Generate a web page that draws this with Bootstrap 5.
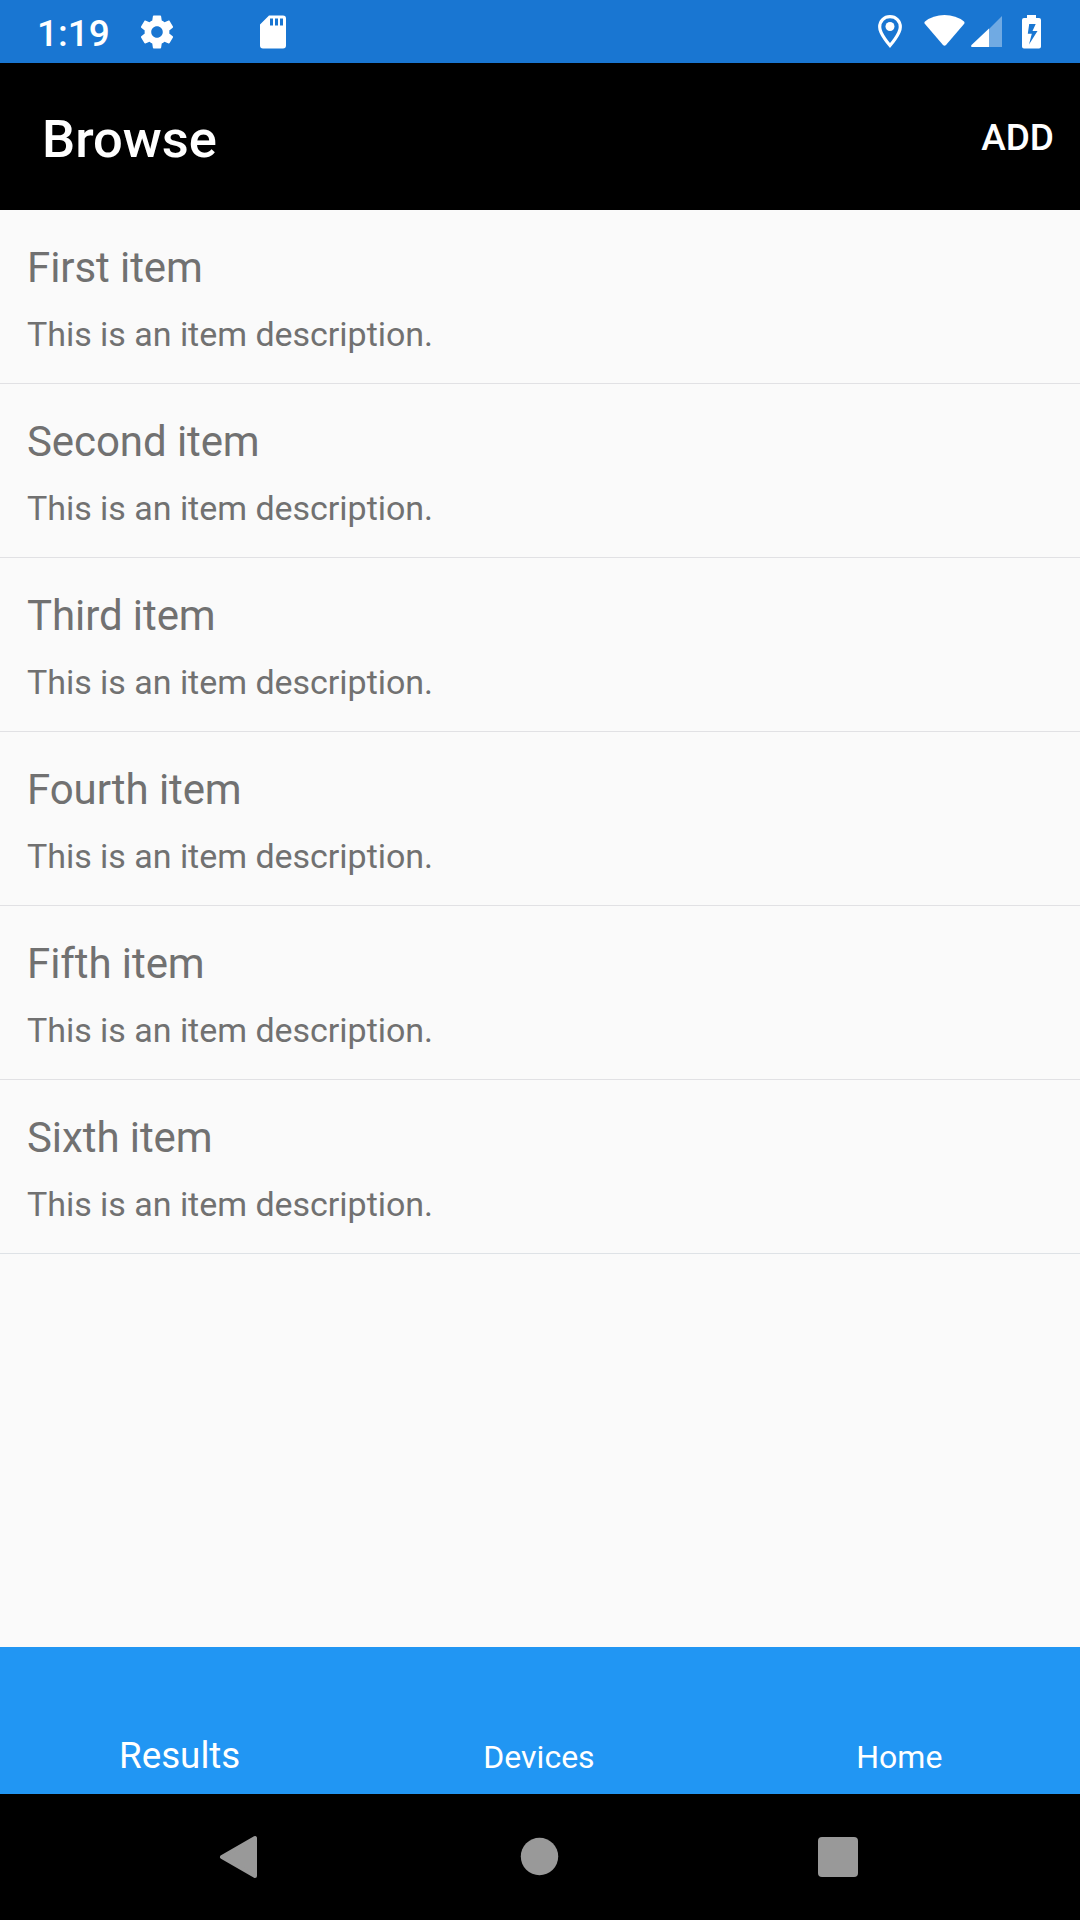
<!DOCTYPE html>
<html lang="en">
<head>
<meta charset="utf-8">
<meta name="viewport" content="width=device-width, initial-scale=1">
<title>Browse</title>
<link href="https://cdn.jsdelivr.net/npm/bootstrap@5.3.0/dist/css/bootstrap.min.css" rel="stylesheet">
<style>
body{font-family:Roboto,"Liberation Sans",sans-serif;background:#fafafa;height:1920px;overflow:hidden}
svg{display:block;flex:none}
.status{height:63px;background:#1976d2;padding:0 39px 0 37px}
.clock{font-size:37px;font-weight:500;line-height:63px;width:104px;padding-top:3px}
.gear{margin-right:83px}
.pin{margin-right:22px}
.signal{margin-left:5px}
.appbar{height:147px;padding:0 26px 0 42px}
.title-text{font-size:52.5px;font-weight:500;line-height:62px;padding-top:4px}
.action{font-size:37px;font-weight:500;line-height:44px;padding:2px 0 0}
.entries .list-group-item{height:174px;padding:33px 27px 0;background:transparent;border-width:0 0 1px;border-color:#e1e1e4;color:#717171}
.entry-name{font-size:42px;line-height:50px;letter-spacing:-.08px}
.entry-note{font-size:34px;line-height:40px;margin-top:21px;letter-spacing:-.03px}
.tabs{height:147px;background:#2196f3;padding-bottom:16px}
.tabs .nav-link{font-size:32px;line-height:40px;padding:0 1px 1px 0;color:#fff}
.tabs .nav-link.active{font-size:36.75px;padding:0 0 2px}
.sysbar{height:126px;padding:0 222px 0 219px}
</style>
</head>
<body class="d-flex flex-column">
<div class="status d-flex align-items-center text-white">
  <div class="clock">1:19</div>
  <svg class="gear" width="32" height="34" viewBox="2.3 1.8 19.4 20.4" fill="#fff"><path d="M19.430 12.980c.04-.32.07-.64.07-.98s-.03-.66-.07-.98l2.110-1.650c.19-.15.24-.42.12-.64l-2-3.460c-.12-.22-.39-.3-.61-.22l-2.490 1c-.52-.4-1.080-.73-1.690-.98l-.38-2.650C14.460 2.180 14.250 2 14 2h-4c-.25 0-.46.18-.49.42l-.38 2.650c-.61.25-1.170.59-1.690.98l-2.490-1c-.23-.09-.49 0-.61.22l-2 3.460c-.13.22-.07.49.12.64l2.110 1.650c-.04.32-.07.65-.07.98s.03.66.07.98l-2.110 1.650c-.19.15-.24.42-.12.64l2 3.460c.12.22.39.3.61.22l2.490-1c.52.4 1.080.73 1.690.98l.38 2.650c.03.24.24.42.49.42h4c.25 0 .46-.18.49-.42l.38-2.650c.61-.25 1.170-.59 1.690-.98l2.490 1c.23.09.49 0 .61-.22l2-3.460c.12-.22.07-.49-.12-.64l-2.110-1.650zM12 15.500c-1.930 0-3.500-1.570-3.500-3.500s1.570-3.500 3.500-3.500 3.500 1.570 3.500 3.500-1.570 3.500-3.500 3.500z"/></svg>
  <svg width="32" height="34" viewBox="0 0 32 34" fill="#fff"><path fill-rule="evenodd" d="M13 .5h14q3 0 3 3V30.500q0 3-3 3H7q-3 0-3-3V9.500zM14 3.500v7h3v-7zM19 3.500v7h3v-7zM24 3.500v7h3v-7z"/></svg>
  <div class="d-flex align-items-center ms-auto">
    <svg class="pin" width="24" height="34" viewBox="0 0 24 34"><path d="M12 1.700C6 1.700 1.700 6 1.700 12 1.700 19 12 30.500 12 30.500S22.300 19 22.300 12C22.300 6 18 1.700 12 1.700z" fill="none" stroke="#fff" stroke-width="3.200"/><circle cx="12" cy="11.500" r="4.500" fill="#fff"/></svg>
    <svg width="41" height="34" viewBox="0 0 41 34"><path d="M1 6.500Q9 0 20.500 0T40 6.500Q41 7.500 40 9L22 30Q20.500 31.500 19 30L1 9Q-.2 7.500 1 6.500z" fill="#fff"/></svg>
    <svg class="signal" width="32" height="34" viewBox="0 0 32 34"><path d="M32 1v31H19V14z" fill="#fff" opacity=".38"/><path d="M19 13.500V32H3Q0 32 1.500 30z" fill="#fff"/></svg>
    <svg width="39" height="34" viewBox="-20 0 39 34"><path fill="#fff" fill-rule="evenodd" d="M5 0h9v3h3q2 0 2 2v26.500q0 2-2 2H2q-2 0-2-2V5q0-2 2-2h3zM7.200 9 5.800 18.800h4L7 29.500 15.500 16h-5l3.200-7z"/></svg>
  </div>
</div>
<header class="appbar bg-black text-white d-flex align-items-center justify-content-between">
  <div class="title-text">Browse</div>
  <button class="btn text-white border-0 action">ADD</button>
</header>
<main class="flex-grow-1">
  <ul class="list-group list-group-flush entries">
    <li class="list-group-item"><div class="entry-name">First item</div><div class="entry-note">This is an item description.</div></li>
    <li class="list-group-item"><div class="entry-name">Second item</div><div class="entry-note">This is an item description.</div></li>
    <li class="list-group-item"><div class="entry-name">Third item</div><div class="entry-note">This is an item description.</div></li>
    <li class="list-group-item"><div class="entry-name">Fourth item</div><div class="entry-note">This is an item description.</div></li>
    <li class="list-group-item"><div class="entry-name">Fifth item</div><div class="entry-note">This is an item description.</div></li>
    <li class="list-group-item border-bottom"><div class="entry-name">Sixth item</div><div class="entry-note">This is an item description.</div></li>
  </ul>
</main>
<nav class="tabs nav nav-fill nav-justified flex-nowrap align-items-end">
  <a class="nav-link active" href="#">Results</a>
  <a class="nav-link" href="#">Devices</a>
  <a class="nav-link" href="#">Home</a>
</nav>
<div class="sysbar bg-black d-flex align-items-center justify-content-between">
  <svg width="40" height="44" viewBox="0 0 40 44"><path d="M3 22 36 3v38z" fill="#999" stroke="#999" stroke-width="4" stroke-linejoin="round"/></svg>
  <svg width="40" height="40" viewBox="0 0 40 40"><circle cx="20.500" cy="19.500" r="18.700" fill="#999"/></svg>
  <svg width="40" height="40" viewBox="0 0 40 40"><rect width="40" height="40" rx="4" fill="#999"/></svg>
</div>
<script src="https://cdn.jsdelivr.net/npm/bootstrap@5.3.0/dist/js/bootstrap.bundle.min.js"></script>
</body>
</html>
